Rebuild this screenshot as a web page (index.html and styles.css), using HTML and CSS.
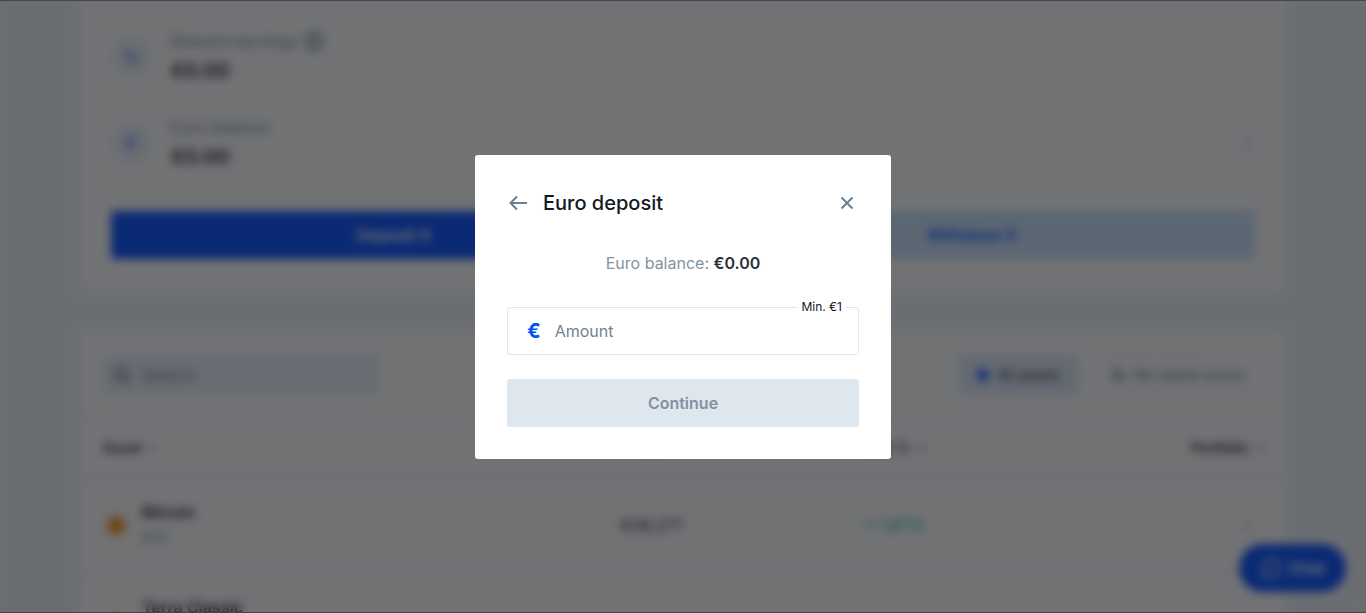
FILE: index.html
```
<!DOCTYPE html>
<html lang="en">
  <head>
    <meta charset="UTF-8" />
    <meta name="viewport" content="width=device-width, initial-scale=1.0" />
    <title>Euro deposit</title>
    <link rel="stylesheet" href="styles.css" />
  </head>
  <body class="modal-open">
    <main class="page">
      <section class="card wallet">
        <div class="balances">
          <div class="balance-row">
            <span class="balance-icon">%</span>
            <div class="balance-text">
              <span class="balance-label">
                Reward earnings
                <svg class="info-icon" viewBox="0 0 20 20" width="20" height="20" fill="none" stroke="currentColor" stroke-width="3">
                  <circle cx="10" cy="10" r="8" />
                  <path d="M10 9v5M10 5v2" />
                </svg>
              </span>
              <strong class="balance-value">€0.00</strong>
            </div>
          </div>
          <div class="balance-row">
            <span class="balance-icon">€</span>
            <div class="balance-text">
              <span class="balance-label">Euro balance</span>
              <strong class="balance-value">€0.00</strong>
            </div>
            <svg class="chevron" viewBox="0 0 16 16" width="16" height="16" fill="none" stroke="currentColor" stroke-width="2">
              <path d="M6 3l5 5-5 5" />
            </svg>
          </div>
        </div>
        <div class="wallet-actions">
          <button class="btn btn-primary" type="button">Deposit €</button>
          <button class="btn btn-light" type="button">Withdraw €</button>
        </div>
      </section>

      <section class="card assets">
        <div class="toolbar">
          <label class="search">
            <svg viewBox="0 0 20 20" width="20" height="20" fill="none" stroke="currentColor" stroke-width="3">
              <circle cx="9" cy="9" r="6" />
              <path d="M13 13l5 5" />
            </svg>
            <input type="search" placeholder="Search" aria-label="Search" />
          </label>
          <div class="filters">
            <button class="filter active" type="button"><span class="dot"></span>All assets</button>
            <button class="filter" type="button">
              <svg viewBox="0 0 14 14" width="14" height="14" fill="none" stroke="currentColor" stroke-width="2">
                <path d="M7 1a6 6 0 1 0 6 6H7z" />
              </svg>
              My digital assets
            </button>
          </div>
        </div>
        <table class="asset-table">
          <thead>
            <tr>
              <th class="col-asset">Asset <span class="sort">▾</span></th>
              <th class="col-price">Price <span class="sort">▾</span></th>
              <th class="col-change">24h % <span class="sort">▾</span></th>
              <th class="col-portfolio">Portfolio <span class="sort">▾</span></th>
            </tr>
          </thead>
          <tbody>
            <tr>
              <td>
                <div class="asset">
                  <span class="coin coin-btc"></span>
                  <div class="asset-name"><strong>Bitcoin</strong><span>BTC</span></div>
                </div>
              </td>
              <td>€28,277</td>
              <td class="up">+ 1.67%</td>
              <td class="empty">-</td>
            </tr>
            <tr>
              <td>
                <div class="asset">
                  <span class="coin coin-lunc"></span>
                  <div class="asset-name"><strong>Terra Classic</strong><span>LUNC</span></div>
                </div>
              </td>
              <td></td>
              <td></td>
              <td></td>
            </tr>
          </tbody>
        </table>
      </section>
    </main>

    <button class="chat" type="button">
      <svg viewBox="0 0 22 22" width="22" height="22" fill="none" stroke="currentColor" stroke-width="2">
        <path d="M4 19l1-4a8 8 0 1 1 3 3z" />
      </svg>
      Chat
    </button>

    <div class="overlay">
      <form class="modal" role="dialog" aria-modal="true" aria-labelledby="modal-title">
        <header class="modal-header">
          <button class="icon-btn" type="button" aria-label="Back">
            <svg viewBox="0 0 24 24" width="24" height="24" fill="none" stroke="currentColor" stroke-width="2">
              <path d="M20 12H3.5M10 5.5L3.5 12l6.5 6.5" />
            </svg>
          </button>
          <h1 id="modal-title">Euro deposit</h1>
          <button class="icon-btn" type="button" aria-label="Close">
            <svg viewBox="0 0 24 24" width="24" height="24" fill="none" stroke="currentColor" stroke-width="2">
              <path d="M6.5 6.5l11 11M17.5 6.5l-11 11" />
            </svg>
          </button>
        </header>
        <p class="modal-balance">Euro balance: <strong>€0.00</strong></p>
        <div class="amount">
          <label class="amount-symbol" for="amount">€</label>
          <input id="amount" type="text" inputmode="decimal" placeholder="Amount" />
          <span class="amount-hint">Min. €1</span>
        </div>
        <button class="btn btn-disabled" type="submit" disabled>Continue</button>
      </form>
    </div>
  </body>
</html>
```
FILE: styles.css
```
* {
  margin: 0;
  padding: 0;
  box-sizing: border-box;
}

body {
  background-color: #eef3fb;
  color: #14181f;
  font-family: Inter, "Liberation Sans", sans-serif;
  font-size: 16px;
  line-height: 24px;
}

body.modal-open {
  height: 100vh;
  overflow: hidden;
}

button,
input {
  font: inherit;
  border: none;
  background: none;
}

button {
  cursor: pointer;
}

svg {
  display: block;
  flex-shrink: 0;
}

.page {
  max-width: 1208px;
  height: 100%;
  margin: 0 auto;
  display: flex;
  flex-direction: column;
  gap: 40px;
  overflow: hidden;
}

.card {
  flex-shrink: 0;
  background-color: #ffffff;
  border-radius: 4px;
}

/* wallet */
.wallet {
  padding: 29px 32px 32px;
}

.balances {
  display: flex;
  flex-direction: column;
  gap: 30px;
}

.balance-row {
  display: flex;
  align-items: center;
  gap: 20px;
}

.balance-icon {
  width: 40px;
  height: 40px;
  border-radius: 50%;
  background-color: #eef3fb;
  color: #3d74ff;
  font-weight: 700;
  line-height: 40px;
  text-align: center;
}

.balance-text {
  flex: 1;
  display: flex;
  flex-direction: column;
  gap: 4px;
}

.balance-label {
  display: flex;
  align-items: center;
  gap: 6px;
  color: #74859a;
}

.balance-value {
  font-size: 20px;
  font-weight: 600;
  line-height: 28px;
}

.chevron {
  color: #b3bfcc;
}

.wallet-actions {
  display: flex;
  gap: 12px;
  margin-top: 40px;
}

.btn {
  flex: 1;
  height: 48px;
  border-radius: 3px;
  font-weight: 600;
}

.btn-primary {
  background-color: #004bff;
  color: #ffffff;
}

.btn-light {
  background-color: #cae3ff;
  color: #004bff;
}

.btn-disabled {
  width: 100%;
  background-color: #dfe7ee;
  color: #82919f;
  cursor: default;
}

/* assets */
.toolbar {
  display: flex;
  justify-content: space-between;
  align-items: center;
  padding: 24px;
}

.search {
  display: flex;
  align-items: center;
  gap: 10px;
  width: 276px;
  height: 40px;
  padding: 0 9px;
  border-radius: 4px;
  background-color: #eaf0fa;
  color: #74859a;
}

.search input {
  flex: 1;
  min-width: 0;
}

.filters {
  display: flex;
  gap: 16px;
}

.filter {
  display: flex;
  align-items: center;
  gap: 8px;
  height: 40px;
  padding: 0 17px;
  border: 1px solid #e3e8f4;
  border-radius: 4px;
  color: #5c7089;
  font-size: 14px;
}

.filter.active {
  background-color: #e0ebfb;
  color: #14181f;
}

.dot {
  width: 12px;
  height: 12px;
  border-radius: 50%;
  background-color: #0052ff;
}

.asset-table {
  width: 100%;
  table-layout: fixed;
  border-collapse: collapse;
  text-align: right;
}

.asset-table th,
.asset-table td {
  padding: 0 24px;
  border-top: 1px solid #e3e8f4;
}

.asset-table th {
  height: 58px;
  font-size: 14px;
  font-weight: 600;
}

.asset-table td {
  height: 95px;
}

.asset-table th:first-child {
  text-align: left;
}

.asset-table tbody tr:first-child td {
  border-top-width: 2px;
}

.col-asset {
  width: 32%;
}

.col-price,
.col-change {
  width: 20%;
}

.col-portfolio {
  width: 28%;
}

.sort {
  margin-left: 4px;
  color: #b3bfcc;
}

.asset {
  display: flex;
  align-items: center;
  gap: 12px;
  text-align: left;
}

.coin {
  width: 27px;
  height: 27px;
  border: 4px solid #ffffff;
  border-radius: 50%;
}

.coin-btc {
  background-color: #f7931a;
}

.coin-lunc {
  background-color: #ffd83d;
}

.asset-name {
  display: flex;
  flex-direction: column;
  gap: 2px;
}

.asset-name strong {
  font-weight: 600;
}

.asset-name span {
  color: #74859a;
  font-size: 14px;
}

.up {
  color: #00a88a;
}

.asset-table .empty {
  padding-right: 36px;
}

.chat {
  position: fixed;
  right: 20px;
  bottom: 21px;
  display: flex;
  align-items: center;
  gap: 7px;
  height: 48px;
  padding: 0 21px;
  border-radius: 24px;
  background-color: #004bff;
  color: #ffffff;
  font-weight: 600;
}

/* modal */
.overlay {
  position: fixed;
  inset: 0;
  display: flex;
  align-items: center;
  justify-content: center;
  border-top: 1px solid #46464a;
  border-bottom: 1px solid #46464a;
  background-color: rgba(18, 20, 24, 0.6);
  backdrop-filter: blur(5px);
}

.modal {
  width: 416px;
  max-width: 100%;
  padding: 32px;
  border-radius: 3px;
  background-color: #ffffff;
}

.modal-header {
  display: flex;
  align-items: center;
  gap: 12px;
  height: 32px;
}

.modal-header h1 {
  flex: 1;
  font-size: 20px;
  font-weight: 500;
}

.icon-btn {
  color: #6b7f92;
}

.modal-balance {
  margin: 32px 0;
  color: #84939e;
  text-align: center;
}

.modal-balance strong {
  color: #2b3036;
  font-weight: 600;
}

.amount {
  position: relative;
  display: flex;
  align-items: center;
  gap: 14px;
  height: 48px;
  margin-bottom: 24px;
  padding: 0 19px;
  border: 1px solid #dfe7ee;
  border-radius: 3px;
}

.amount-symbol {
  color: #0052ff;
  font-size: 20px;
  font-weight: 700;
}

.amount input {
  flex: 1;
  min-width: 0;
  outline: none;
}

.amount input::placeholder,
.search input::placeholder {
  color: #73828c;
  opacity: 1;
}

/* sits on the top border of the field */
.amount-hint {
  position: absolute;
  top: -9px;
  right: 12px;
  padding: 0 4px;
  background-color: #ffffff;
  font-size: 12px;
  line-height: 16px;
}
```
